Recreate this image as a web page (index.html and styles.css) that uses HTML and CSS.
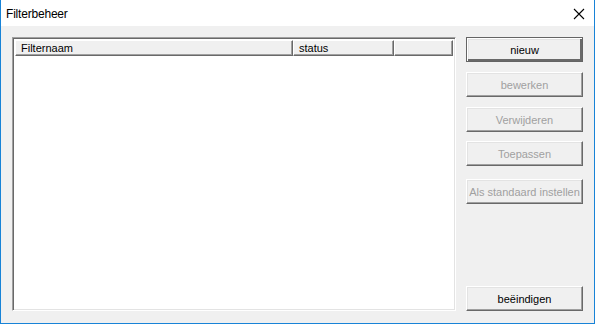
FILE: index.html
```html
<!DOCTYPE html>
<html>
<head>
    <title>Filterbeheer</title>
    <link rel="stylesheet" href="styles.css">
</head>
<body>
    <div class="window">
        <div class="titlebar">
            <span class="title">Filterbeheer</span>
            <svg class="close" width="12" height="12" viewBox="0 0 12 12">
                <path d="M1 1 L11 11 M11 1 L1 11" stroke="#000" stroke-width="1.1" fill="none"/>
            </svg>
        </div>

        <div class="client">
            <div class="listbox">
                <div class="header">
                    <div class="col col-name">Filternaam</div>
                    <div class="col col-status">status</div>
                    <div class="col col-extra"></div>
                </div>
                <div class="rows"></div>
            </div>

            <div class="buttons">
                <button class="btn default">nieuw</button>
                <button class="btn" disabled>bewerken</button>
                <button class="btn" disabled>Verwijderen</button>
                <button class="btn btn-apply" disabled>Toepassen</button>
                <button class="btn btn-standard" disabled>Als standaard instellen</button>
                <button class="btn btn-end">beëindigen</button>
            </div>
        </div>
    </div>
</body>
</html>
```

FILE: styles.css
```css
html, body {
    margin: 0;
    padding: 0;
}

body {
    font-family: "Liberation Sans", Arial, sans-serif;
    font-size: 11px;
    color: #000;
    background-color: #fff;
}

.window {
    width: 595px;
    height: 324px;
    box-sizing: border-box;
    border: 1px solid #1883d7;
    border-top: none;
    display: flex;
    flex-direction: column;
}

.titlebar {
    height: 26px;
    background-color: #fff;
    display: flex;
    align-items: center;
    justify-content: space-between;
    padding: 0 9px 0 5px;
}

.title {
    font-size: 12px;
    letter-spacing: -0.2px;
    margin-top: 1px;
}

.close {
    display: block;
    margin-top: 1px;
}

.client {
    flex: 1;
    background-color: #f0f0f0;
    display: flex;
    padding: 11px 11px 12px 11px;
    gap: 10px;
}

.listbox {
    width: 445px;
    box-sizing: border-box;
    border: 1px solid;
    border-color: #a0a0a0 #fff #fff #a0a0a0;
    box-shadow: inset 1px 1px #696969, inset -1px -1px #e3e3e3;
    background-color: #fff;
    padding: 2px 2px 2px 2px;
    display: flex;
    flex-direction: column;
}

.header {
    display: flex;
    height: 16px;
}

.col {
    box-sizing: border-box;
    background-color: #f0f0f0;
    border: 1px solid;
    border-color: #fff #696969 #696969 #fff;
    box-shadow: inset -1px -1px #a0a0a0;
    padding: 1px 0 0 5px;
    line-height: 12px;
}

.col-name {
    width: 278px;
}

.col-status {
    width: 101px;
}

.col-extra {
    flex: 1;
}

.rows {
    flex: 1;
}

.buttons {
    width: 117px;
    display: flex;
    flex-direction: column;
}

.btn {
    height: 25px;
    width: 117px;
    box-sizing: border-box;
    font-family: "Liberation Sans", Arial, sans-serif;
    font-size: 11px;
    color: #000;
    background-color: #f0f0f0;
    border: 1px solid;
    border-color: #fff #696969 #696969 #fff;
    box-shadow: inset -1px -1px #a0a0a0, inset 1px 1px #e3e3e3;
    padding: 0;
    margin: 0 0 10px 0;
}

.btn:disabled {
    color: #a0a0a0;
}

.btn.default {
    border: 1px solid #646464;
    box-shadow: inset 1px 1px #fff, inset -2px -2px #696969, inset 2px 2px #e3e3e3;
}

.btn-apply {
    margin-top: -1px;
}

.btn-standard {
    margin-top: 3px;
}

.btn-end {
    margin-top: auto;
    margin-bottom: 0;
}
```
